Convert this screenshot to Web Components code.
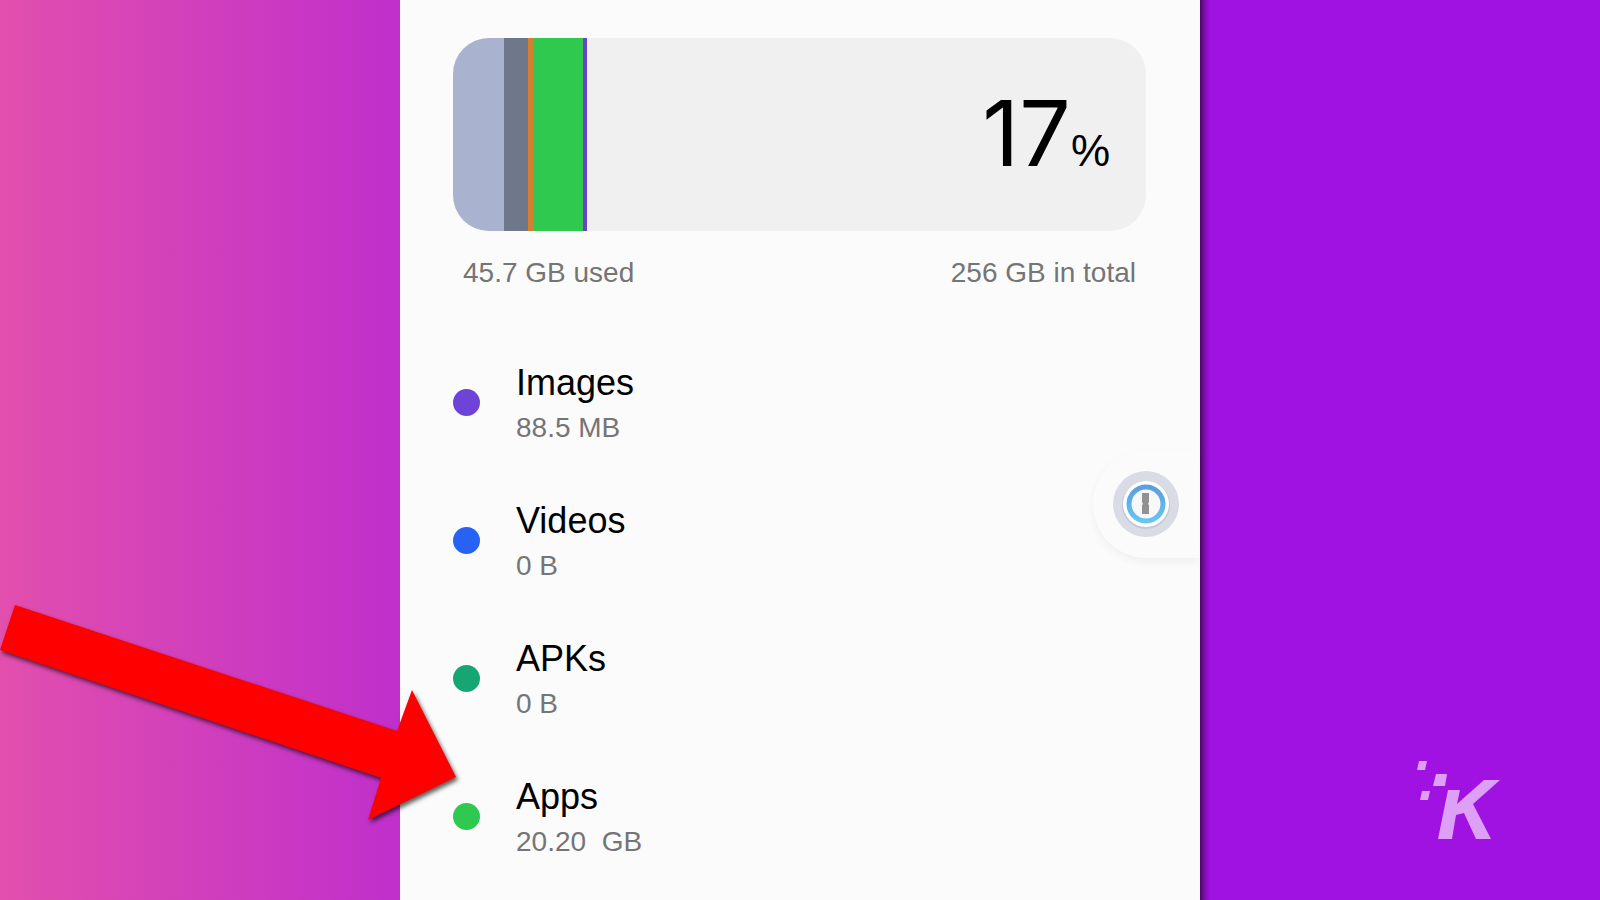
<!DOCTYPE html>
<html lang="en">
<head>
<meta charset="utf-8">
<meta name="viewport" content="width=device-width, initial-scale=1">
<title>Storage usage</title>
<style>
html, body { margin: 0; min-height: 100%; }
body { font-family: "Liberation Sans", Arial, sans-serif; color: #000; }
</style>
</head>
<body>
<storage-page></storage-page>
<script>
const define = (name, html) => {
  const template = document.createElement('template');
  template.innerHTML = html;
  customElements.define(name, class extends HTMLElement {
    constructor() {
      super();
      this.attachShadow({ mode: 'open' }).append(template.content.cloneNode(true));
    }
  });
};

define('usage-bar', `
<style>
:host { display: block; }
.bar { display: flex; height: 193px; border-radius: 36px; overflow: hidden; background: #f0f0f0; }
.bar i { flex: none; }
.system { width: 51px; background: #a9b2cf; }
.other { width: 24px; background: #6f778a; }
.audio { width: 5px; background: #d48030; }
.apps { width: 50px; background: #30c94f; }
.images { width: 4px; background: #6a43cb; }
.value { margin-left: auto; padding: 14px 36px 0 0; align-self: center; display: flex; align-items: baseline; line-height: 100px; }
.number { font-family: Inter, sans-serif; font-size: 91px; }
.unit { font-size: 44px; }
.labels { display: flex; justify-content: space-between; margin: 23px 10px 0; font-size: 28px; line-height: 38px; color: #757575; }
</style>
<div class="bar">
  <i class="system"></i><i class="other"></i><i class="audio"></i><i class="apps"></i><i class="images"></i>
  <div class="value"><span class="number">17</span><span class="unit">%</span></div>
</div>
<div class="labels"><slot name="used"></slot><slot name="total"></slot></div>`);

define('category-row', `
<style>
:host { display: flex; align-items: center; gap: 36px; }
.dot { width: 27px; height: 27px; border-radius: 50%; background: var(--dot); }
.text { display: flex; flex-direction: column; gap: 3px; }
.title { font-size: 36px; line-height: 48px; }
.size { font-size: 28px; line-height: 36px; color: #757575; white-space: pre; }
</style>
<span class="dot"></span>
<div class="text"><span class="title"><slot></slot></span><span class="size"><slot name="size"></slot></span></div>`);

define('password-bubble', `
<style>
:host { display: block; }
button { display: flex; align-items: center; width: 107px; height: 108px; padding: 0 0 0 19px; border: 0; border-radius: 54px 0 0 54px; background: #fbfbfc; box-shadow: 0 4px 8px #0000000c; }
svg { display: block; width: 68px; height: 68px; }
</style>
<button aria-label="Open password manager">
<svg viewBox="0 0 68 68">
  <defs><linearGradient id="ring" x2="0" y2="1"><stop stop-color="#5b9fdf"/><stop offset="1" stop-color="#67c5ef"/></linearGradient></defs>
  <circle cx="34" cy="34" r="33" fill="#d9dce5"/>
  <circle cx="34" cy="35" r="24" fill="#c4c8d2"/>
  <circle cx="34" cy="34" r="23" fill="#fff"/>
  <circle cx="34" cy="34" r="17" fill="#f8f8f9" stroke="url(#ring)" stroke-width="5"/>
  <path d="M30 23h7v9l-1 2 1 1v9h-7v-9l1-1-1-2z" fill="#929292"/>
</svg>
</button>`);

define('brand-mark', `
<style>
:host { display: block; width: 120px; height: 120px; }
svg { display: block; width: 100%; height: 100%; }
</style>
<svg viewBox="0 0 120 120" fill="#dda0f6" aria-label="K">
  <path d="M19 21h8l-2 9h-8zM36 34h11l-2 12H33zM22 51h8l-2 9h-8z"/>
  <path d="M48 50h12l-3 14L84 40h16L73 64l18 35H76L64 73l-8 2-4 24H38z"/>
</svg>`);

define('pointer-arrow', `
<style>
:host { display: block; width: 470px; height: 240px; pointer-events: none; }
svg { display: block; width: 100%; height: 100%; filter: drop-shadow(2px 3px 2px #000000a0); }
</style>
<svg viewBox="0 0 470 240" aria-hidden="true">
  <path d="M15 15 397 141 412 100 456 187 368 230 381 188 0 60z" fill="#f00"/>
</svg>`);

define('storage-page', `
<style>
:host { display: grid; grid-template-columns: 1fr 2fr 1fr; min-height: 100vh; position: relative; overflow: hidden; }
.left { background: linear-gradient(90deg, #e24fad, #c02fcb); }
main { position: relative; box-sizing: border-box; padding: 38px 54px 24px 53px; background: #fbfbfb; }
ul { display: flex; flex-direction: column; gap: 51px; margin: 67px 0 0; padding: 0; list-style: none; }
password-bubble { position: absolute; right: 0; top: 450px; }
.right { display: flex; justify-content: flex-end; align-items: flex-end; padding: 0 80px 40px 0; background: linear-gradient(90deg, #4b0869, #7f0fb2 5px, #a012e2 10px); }
pointer-arrow { position: absolute; left: 0; top: 590px; }
</style>
<div class="left"></div>
<main>
  <usage-bar><span slot="used">45.7 GB used</span><span slot="total">256 GB in total</span></usage-bar>
  <ul>
    <li><category-row style="--dot:#6e43d8">Images<span slot="size">88.5 MB</span></category-row></li>
    <li><category-row style="--dot:#2862f4">Videos<span slot="size">0 B</span></category-row></li>
    <li><category-row style="--dot:#16a673">APKs<span slot="size">0 B</span></category-row></li>
    <li><category-row style="--dot:#2fc950">Apps<span slot="size">20.20  GB</span></category-row></li>
  </ul>
  <password-bubble></password-bubble>
</main>
<div class="right"><brand-mark></brand-mark></div>
<pointer-arrow></pointer-arrow>`);
</script>
</body>
</html>
